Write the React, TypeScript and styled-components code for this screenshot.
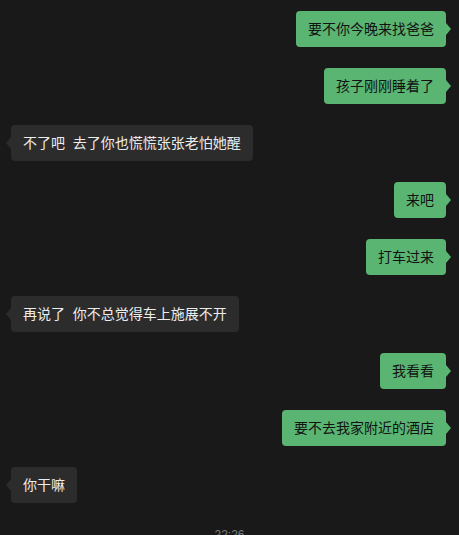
import styled, { createGlobalStyle } from 'styled-components';

const GlobalStyle = createGlobalStyle`
  html, body {
    margin: 0;
    padding: 0;
    background: #191919;
  }
  body {
    font-family: "Liberation Sans", "Noto Sans CJK SC", sans-serif;
  }
`

const Chat = styled.div`
  display: flex;
  flex-direction: column;
  gap: 21px;
  padding: 11px 13px 0 11px;
  min-height: 100vh;
  box-sizing: border-box;
  background: #191919;
`

const Row = styled.div<{ $mine: boolean }>`
  display: flex;
  justify-content: ${p => (p.$mine ? 'flex-end' : 'flex-start')};
`

const Bubble = styled.div<{ $mine: boolean }>`
  position: relative;
  padding: 8px 12px;
  border-radius: 4px;
  font-size: 14px;
  line-height: 20px;
  white-space: pre;
  background: ${p => (p.$mine ? '#5ab573' : '#2c2c2c')};
  color: ${p => (p.$mine ? '#121212' : '#ececec')};

  &::after {
    content: '';
    position: absolute;
    top: 12px;
    ${p => (p.$mine ? 'right: -5px;' : 'left: -5px;')}
    border-top: 6px solid transparent;
    border-bottom: 6px solid transparent;
    ${p => (p.$mine ? 'border-left: 5px solid #5ab573;' : 'border-right: 5px solid #2c2c2c;')}
  }
`

const Time = styled.div`
  margin-top: 3px;
  text-align: center;
  font-size: 12px;
  line-height: 17px;
  color: #7c7c7c;
  padding-left: 2px;
`

const messages: { mine: boolean; text: string }[] = [
  { mine: true, text: '要不你今晚来找爸爸' },
  { mine: true, text: '孩子刚刚睡着了' },
  { mine: false, text: '不了吧  去了你也慌慌张张老怕她醒' },
  { mine: true, text: '来吧' },
  { mine: true, text: '打车过来' },
  { mine: false, text: '再说了  你不总觉得车上施展不开' },
  { mine: true, text: '我看看' },
  { mine: true, text: '要不去我家附近的酒店' },
  { mine: false, text: '你干嘛' },
]

function App() {
  return (
    <>
      <GlobalStyle />
      <Chat>
        {messages.map((m, i) => (
          <Row key={i} $mine={m.mine}>
            <Bubble $mine={m.mine}>{m.text}</Bubble>
          </Row>
        ))}
        <Time>22:26</Time>
      </Chat>
    </>
  );
}

export default App;
